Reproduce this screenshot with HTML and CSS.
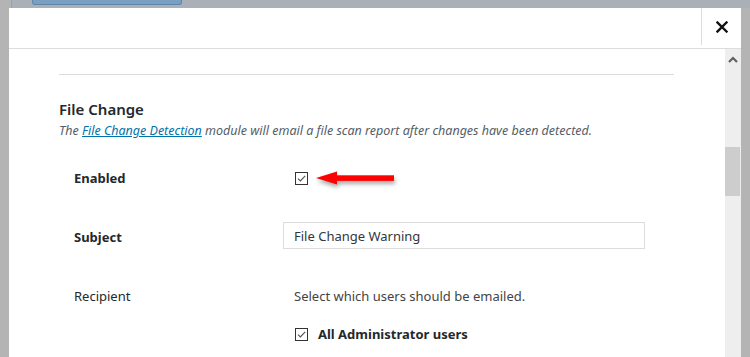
FILE: index.html
```html
<!DOCTYPE html>
<html lang="en">

<head>
    <meta charset="UTF-8">
    <title>File Change settings</title>
    <link rel="stylesheet" href="styles.css">
</head>

<body>
    <div class="behind">
        <span class="behind-btn"></span>
    </div>

    <div class="modal">
        <div class="modal-head">
            <div class="head-space"></div>
            <button class="close" aria-label="Close">
                <svg width="12" height="12" viewBox="0 0 12 12">
                    <path d="M1.5 1.5 L10.5 10.5 M10.5 1.5 L1.5 10.5" stroke="#111" stroke-width="2.4" stroke-linecap="square" />
                </svg>
            </button>
        </div>

        <div class="modal-body">
            <div class="content">
                <hr class="divider">
                <h3>File Change</h3>
                <p class="desc">The <a href="#">File Change Detection</a> module will email a file scan report after changes have been detected.</p>

                <div class="form-table">
                    <div class="row row-enabled">
                        <div class="row-label"><strong>Enabled</strong></div>
                        <div class="row-value">
                            <span class="check">
                                <svg width="11" height="11" viewBox="0 0 11 11"><path d="M2 5.6 L4.4 8 L9.2 2.8" fill="none" stroke="#555" stroke-width="1.2" /></svg>
                            </span>
                            <!-- callout arrow -->
                            <svg class="callout" width="80" height="16" viewBox="0 0 80 16">
                                <polygon points="0,8 21,1.5 21,14.5" fill="#f00" />
                                <rect x="20" y="5.3" width="58" height="5.6" fill="#f00" />
                            </svg>
                        </div>
                    </div>

                    <div class="row row-subject">
                        <div class="row-label subject-label"><strong>Subject</strong></div>
                        <div class="row-value">
                            <input type="text" class="text-input" value="File Change Warning">
                        </div>
                    </div>

                    <div class="row row-recipient">
                        <div class="row-label">Recipient</div>
                        <div class="row-value">
                            <span class="note">Select which users should be emailed.</span>
                        </div>
                    </div>

                    <div class="row row-admins">
                        <div class="row-label"></div>
                        <div class="row-value">
                            <label class="check-label">
                                <span class="check">
                                    <svg width="11" height="11" viewBox="0 0 11 11"><path d="M2 5.6 L4.4 8 L9.2 2.8" fill="none" stroke="#555" stroke-width="1.2" /></svg>
                                </span>
                                <strong>All Administrator users</strong>
                            </label>
                        </div>
                    </div>
                </div>
            </div>

            <div class="scrollbar">
                <span class="scroll-up">
                    <svg width="10" height="7" viewBox="0 0 10 7"><path d="M1 6 L5 2 L9 6" fill="none" stroke="#606060" stroke-width="2.2" /></svg>
                </span>
                <span class="thumb"></span>
            </div>
        </div>
    </div>
</body>

</html>
```

FILE: styles.css
```css
body {
    margin: 0;
    height: 357px;
    overflow: hidden;
    background-color: #b4b4b4;
    font-family: 'Noto Sans', 'Open Sans', sans-serif;
    font-size: 13px;
    color: #23282d;
}

.behind {
    height: 8px;
    margin-left: 11px;
    background-color: #a9b0b8;
    border-left: 1px solid #8ea5b9;
}

.behind-btn {
    display: block;
    width: 148px;
    height: 4px;
    margin-left: 20px;
    background-color: #79a0c1;
    border: 1px solid #5f86a8;
    border-top: none;
    border-radius: 0 0 3px 3px;
}

.modal {
    margin-left: 9px;
    width: 732px;
    height: 349px;
    background-color: #fff;
    display: flex;
    flex-direction: column;
}

.modal-head {
    display: flex;
    height: 40px;
    border-bottom: 1px solid #ddd;
}

.head-space {
    flex: 1;
}

.close {
    width: 40px;
    height: 37px;
    padding: 0;
    background: #fff;
    border: none;
    border-left: 1px solid #ddd;
    display: flex;
    align-items: center;
    justify-content: center;
    cursor: pointer;
}

.modal-body {
    flex: 1;
    display: flex;
    min-height: 0;
}

.content {
    flex: 1;
    padding: 25px 51px 0 50px;
}

.divider {
    margin: 0;
    border: none;
    border-top: 1px solid #ddd;
}

h3 {
    margin: 24px 0 0;
    font-size: 15px;
    line-height: 20px;
    font-weight: 600;
    color: #23282d;
}

.desc {
    margin: 3px 0 0;
    font-size: 12.5px;
    line-height: 18px;
    font-style: italic;
    color: #555d66;
}

.desc a {
    color: #0073aa;
}

.form-table {
    margin: 20px 0 0 15px;
}

.row {
    display: flex;
    align-items: center;
}

.row-label {
    width: 209px;
    flex-shrink: 0;
}

.row-label strong {
    font-weight: 700;
}

.subject-label {
    padding-top: 3px;
}

.row-value {
    display: flex;
    align-items: center;
}

.row-enabled {
    height: 36px;
}

.row-subject {
    margin-top: 26px;
}

.row-recipient {
    margin-top: 38px;
    line-height: 18px;
}

.row-admins {
    margin-top: 20px;
    line-height: 18px;
}

.check {
    width: 11px;
    height: 11px;
    border: 1px solid #333;
    margin-left: 12px;
    display: flex;
    align-items: center;
    justify-content: center;
    flex-shrink: 0;
}

.callout {
    margin-left: 8px;
    filter: drop-shadow(1px 3px 2px rgba(0, 0, 0, 0.35));
}

.text-input {
    width: 362px;
    height: 27px;
    box-sizing: border-box;
    padding: 0 10px;
    border: 1px solid #ddd;
    font-family: inherit;
    font-size: 13px;
    color: #32373c;
    background-color: #fff;
}

.note {
    margin-left: 11px;
    color: #444;
}

.check-label {
    display: flex;
    align-items: center;
}

.check-label strong {
    margin-left: 10px;
    font-weight: 700;
    color: #23282d;
}

.scrollbar {
    width: 16px;
    background-color: #eee;
    display: flex;
    flex-direction: column;
}

.scroll-up {
    height: 16px;
    display: flex;
    align-items: center;
    justify-content: center;
    padding-top: 2px;
}

.thumb {
    width: 15px;
    height: 49px;
    margin-top: 80px;
    background-color: #cdcdcd;
}
```
